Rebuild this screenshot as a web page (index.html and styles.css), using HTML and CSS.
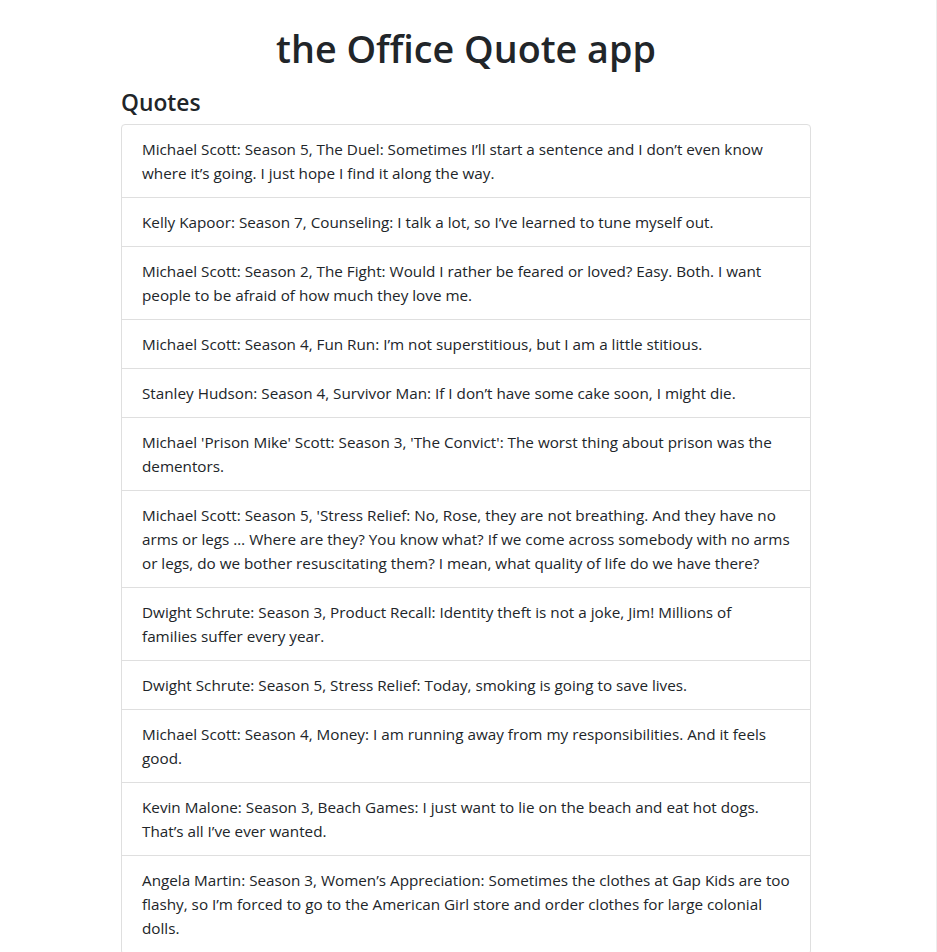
FILE: index.html
```html
<!DOCTYPE html>
<html lang="en">
<head>
<meta charset="utf-8">
<title>the Office Quote app</title>
<link rel="stylesheet" href="styles.css">
</head>
<body>
<main class="container">
  <h1 class="title">the Office Quote app</h1>
  <h4 class="section-title">Quotes</h4>
  <ul class="list-group">
    <li class="list-group-item">Michael Scott: Season 5, The Duel: Sometimes I’ll start a sentence and I don’t even know where it’s going. I just hope I find it along the way.</li>
    <li class="list-group-item">Kelly Kapoor: Season 7, Counseling: I talk a lot, so I’ve learned to tune myself out.</li>
    <li class="list-group-item">Michael Scott: Season 2, The Fight: Would I rather be feared or loved? Easy. Both. I want people to be afraid of how much they love me.</li>
    <li class="list-group-item">Michael Scott: Season 4, Fun Run: I’m not superstitious, but I am a little stitious.</li>
    <li class="list-group-item">Stanley Hudson: Season 4, Survivor Man: If I don’t have some cake soon, I might die.</li>
    <li class="list-group-item">Michael 'Prison Mike' Scott: Season 3, 'The Convict': The worst thing about prison was the dementors.</li>
    <li class="list-group-item">Michael Scott: Season 5, 'Stress Relief: No, Rose, they are not breathing. And they have no arms or legs … Where are they? You know what? If we come across somebody with no arms or legs, do we bother resuscitating them? I mean, what quality of life do we have there?</li>
    <li class="list-group-item">Dwight Schrute: Season 3, Product Recall: Identity theft is not a joke, Jim! Millions of families suffer every year.</li>
    <li class="list-group-item">Dwight Schrute: Season 5, Stress Relief: Today, smoking is going to save lives.</li>
    <li class="list-group-item">Michael Scott: Season 4, Money: I am running away from my responsibilities. And it feels good.</li>
    <li class="list-group-item">Kevin Malone: Season 3, Beach Games: I just want to lie on the beach and eat hot dogs. That’s all I’ve ever wanted.</li>
    <li class="list-group-item">Angela Martin: Season 3, Women’s Appreciation: Sometimes the clothes at Gap Kids are too flashy, so I’m forced to go to the American Girl store and order clothes for large colonial dolls.</li>
  </ul>
</main>
</body>
</html>
```
FILE: styles.css
```css
html {
  overflow: hidden;
  background: #fff;
}

body {
  margin: 0;
  font-family: "Open Sans", "Noto Sans", sans-serif;
  font-size: 15.25px;
  line-height: 24px;
  color: #212529;
  background: #fff;
  border-right: 1px solid #ececec;
  min-height: 952px;
  box-sizing: border-box;
}

.container {
  width: 690px;
  margin-left: 121px;
}

.title {
  margin: 25px 0 16px;
  font-size: 37.7px;
  line-height: 48px;
  font-weight: 600;
  text-align: center;
}

.section-title {
  margin: 0 0 7px;
  font-size: 22.8px;
  line-height: 28px;
  font-weight: 600;
}

.list-group {
  list-style: none;
  margin: 0;
  padding: 0 0 2px;
  border: 1px solid #dfdfdf;
  border-radius: 4px;
}

.list-group-item {
  padding: 12px 20px;
}

.list-group-item + .list-group-item {
  border-top: 1px solid #dfdfdf;
}
```
